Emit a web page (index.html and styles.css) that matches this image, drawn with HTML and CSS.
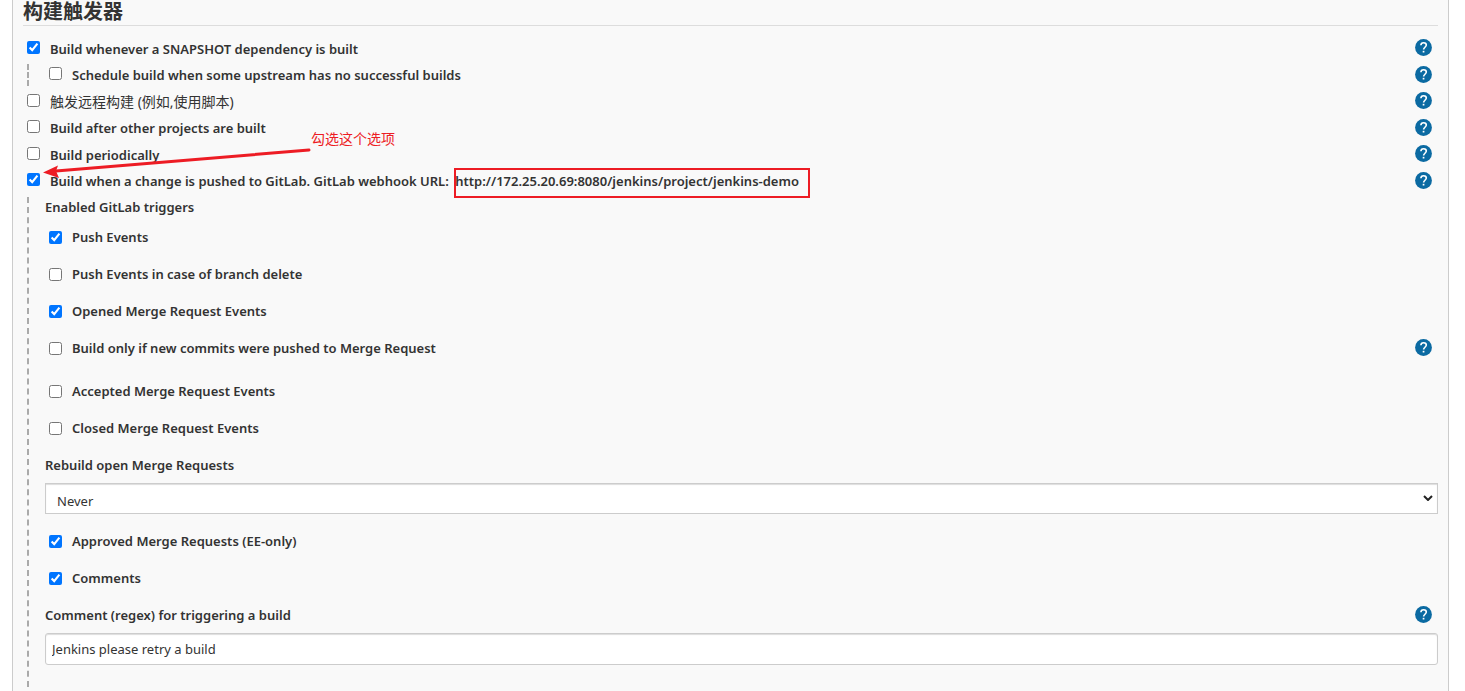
FILE: index.html
```html
<!DOCTYPE html>
<html lang="zh-CN">
<head>
<meta charset="utf-8">
<title>构建触发器</title>
<link rel="stylesheet" href="styles.css">
</head>
<body>
<svg class="defs" aria-hidden="true">
  <symbol id="help" viewBox="0 0 17 17">
    <circle cx="8.5" cy="8.5" r="8.4" fill="#0b6aa2"/>
    <path d="M5.9 6.3C5.9 4.7 7 3.7 8.6 3.7s2.7 1 2.7 2.4c0 2-2.7 2.3-2.7 4.4" fill="none" stroke="#fff" stroke-width="1.6"/>
    <rect x="7.7" y="11.8" width="1.7" height="1.7" fill="#fff"/>
  </symbol>
</svg>
<main class="panel">
  <h1 class="title">构建触发器</h1>
  <form class="form">
    <div class="row row--tall">
      <label class="option"><input type="checkbox" checked><span>Build whenever a SNAPSHOT dependency is built</span></label>
      <button type="button" class="help" aria-label="Help"><svg><use href="#help"/></svg></button>
    </div>
    <div class="row">
      <label class="option option--nested"><input type="checkbox"><span>Schedule build when some upstream has no successful builds</span></label>
      <button type="button" class="help" aria-label="Help"><svg><use href="#help"/></svg></button>
    </div>
    <div class="row row--tall">
      <label class="option option--cjk"><input type="checkbox"><span>触发远程构建 (例如,使用脚本)</span></label>
      <button type="button" class="help" aria-label="Help"><svg><use href="#help"/></svg></button>
    </div>
    <div class="row">
      <label class="option"><input type="checkbox"><span>Build after other projects are built</span></label>
      <button type="button" class="help" aria-label="Help"><svg><use href="#help"/></svg></button>
    </div>
    <div class="row row--tall">
      <label class="option"><input type="checkbox"><span>Build periodically</span></label>
      <button type="button" class="help" aria-label="Help"><svg><use href="#help"/></svg></button>
    </div>
    <div class="row">
      <label class="option"><input type="checkbox" checked><span>Build when a change is pushed to GitLab. GitLab webhook URL: <span class="url">http://172.25.20.69:8080/jenkins/project/jenkins-demo</span></span></label>
      <button type="button" class="help" aria-label="Help"><svg><use href="#help"/></svg></button>
    </div>
    <div class="group" role="group" aria-labelledby="triggers">
      <div id="triggers" class="group-title">Enabled GitLab triggers</div>
      <div class="event"><label class="option"><input type="checkbox" checked><span>Push Events</span></label></div>
      <div class="event"><label class="option"><input type="checkbox"><span>Push Events in case of branch delete</span></label></div>
      <div class="event"><label class="option"><input type="checkbox" checked><span>Opened Merge Request Events</span></label></div>
      <div class="event event--spaced">
        <label class="option"><input type="checkbox"><span>Build only if new commits were pushed to Merge Request</span></label>
        <button type="button" class="help" aria-label="Help"><svg><use href="#help"/></svg></button>
      </div>
      <div class="event"><label class="option"><input type="checkbox"><span>Accepted Merge Request Events</span></label></div>
      <div class="event"><label class="option"><input type="checkbox"><span>Closed Merge Request Events</span></label></div>
      <div class="event"><label for="rebuild">Rebuild open Merge Requests</label></div>
      <div class="select-wrap">
        <select id="rebuild" class="field select"><option>Never</option></select>
        <svg class="chevron" viewBox="0 0 10 6" aria-hidden="true"><path d="M1 1l4 4 4-4" fill="none" stroke="#222" stroke-width="2"/></svg>
      </div>
      <div class="event"><label class="option"><input type="checkbox" checked><span>Approved Merge Requests (EE-only)</span></label></div>
      <div class="event"><label class="option"><input type="checkbox" checked><span>Comments</span></label></div>
      <div class="event">
        <label for="comment">Comment (regex) for triggering a build</label>
        <button type="button" class="help" aria-label="Help"><svg><use href="#help"/></svg></button>
      </div>
      <input id="comment" class="field text" type="text" value="Jenkins please retry a build">
    </div>
  </form>
  <svg class="arrow" viewBox="0 0 270 36" aria-hidden="true">
    <path d="M266 6L13 27" stroke="#ed1c24" stroke-width="3" stroke-linecap="round"/>
    <path d="M0 28.500L15 21.500L13 27L16 34Z" fill="#ed1c24"/>
  </svg>
  <span class="note">勾选这个选项</span>
</main>
</body>
</html>
```
FILE: styles.css
```css
* { box-sizing: border-box; }

body {
  margin: 0;
  background: #fff;
  color: #333;
  font: 600 13px/20px "Noto Sans", "Noto Sans CJK SC", sans-serif;
}

.defs { position: absolute; width: 0; height: 0; }

.panel {
  position: relative;
  min-height: 100vh;
  margin: 0 16px 0 12px;
  padding: 0 10px;
  border: solid #ccc;
  border-width: 0 1px;
  background: #f9f9f9;
}

.title {
  margin: 0 0 9px;
  padding-bottom: 3px;
  border-bottom: 1px solid #ddd;
  font: 700 20px/22px "Noto Sans CJK SC", sans-serif;
}

.row, .event {
  display: flex;
  align-items: center;
  justify-content: space-between;
  padding-right: 6px;
}
.row { height: 26px; padding-left: 4px; }
.row--tall { height: 27px; }

.option { display: flex; align-items: center; gap: 10px; }
.option input { width: 13px; height: 13px; margin: 0; }
.row .option input { margin-bottom: 3px; }
.option--nested {
  height: 22px;
  padding-left: 20px;
  border-left: 2px dashed #aaa;
}
.option--cjk { font: 400 14px/20px "Noto Sans", "Noto Sans CJK SC", sans-serif; }

.help {
  width: 17px;
  height: 17px;
  padding: 0;
  border: 0;
  background: none;
}
.row .help { margin-bottom: 2px; }
.help svg { display: block; width: 17px; height: 17px; }

.url { position: relative; margin-left: 3px; }
.url::after {
  content: "";
  position: absolute;
  inset: -4px -11px -8px -1px;
  border: 2px solid #ed1c24;
}

.group {
  min-height: 500px;
  margin: 3px 0 0 4px;
  padding-left: 16px;
  border-left: 2px dashed #aaa;
}
.group-title { line-height: 21px; }
.event { height: 37px; }
.event .option { padding-left: 4px; }
.event .option input { margin-top: 2px; }
.event--spaced { margin-bottom: 6px; }

.field {
  display: block;
  width: 100%;
  border: 1px solid #ccc;
  background: #fff;
  color: #333;
  font: 400 13px/20px "Noto Sans", sans-serif;
}
.select-wrap { position: relative; margin-bottom: 8px; }
.select {
  height: 31px;
  padding: 4px 11px 0;
  border-radius: 0;
  appearance: none;
  box-shadow: inset 0 1px 1px #ddd;
}
.chevron {
  position: absolute;
  top: 12px;
  right: 5px;
  width: 10px;
  height: 6px;
}
.text {
  height: 32px;
  padding: 0 6px;
  border-radius: 3px;
  box-shadow: inset 0 1px 1px #ddd;
}

.arrow {
  position: absolute;
  top: 144px;
  left: 30px;
  width: 270px;
  height: 36px;
}
.note {
  position: absolute;
  top: 128px;
  left: 298px;
  color: #ed1c24;
  font: 400 14px/20px "Noto Sans CJK SC", sans-serif;
}
```
